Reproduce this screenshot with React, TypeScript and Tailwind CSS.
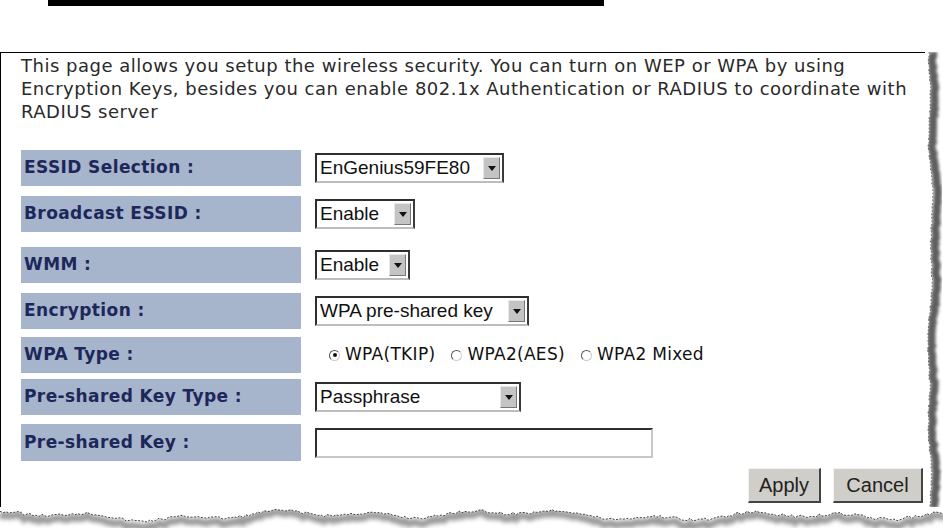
import React from 'react';

const desc = "font-['DejaVu_Sans','Liberation_Sans',sans-serif]";
const arial = "font-['Liberation_Sans',Arial,sans-serif]";

// deterministic noise for the torn paper edge
function wobble(count: number, seed: number, amp: number) {
  const out: number[] = [];
  let s = seed;
  for (let i = 0; i < count; i++) {
    s = (s * 9301 + 49297) % 233280;
    const r = s / 233280;
    const slow = Math.sin(i / 5 + seed) * 0.45 + Math.sin(i / 13 + seed * 2) * 0.5 + Math.sin(i / 31) * 0.35;
    out.push((r - 0.5) * amp * 0.6 + slow * amp);
  }
  return out;
}

const RightEdge: React.FC<{ height: number }> = ({ height }) => {
  const pts = wobble(Math.ceil(height / 3) + 1, 11, 2.5);
  const line = pts.map((d, i) => `${5 + d},${i * 3}`).join(' ');
  return (
    <svg width="18" height={height} className="shrink-0 block">
      <defs>
        <filter id="rb" x="-50%" y="-5%" width="200%" height="110%">
          <feGaussianBlur stdDeviation="1.4" />
        </filter>
      </defs>
      <polyline points={pts.map((d, i) => `${9 + d * 1.3},${i * 3}`).join(' ')} fill="none" stroke="#5e5e5e" strokeWidth="8" filter="url(#rb)" />
      <polygon points={`0,0 ${line} 0,${height}`} fill="#ffffff" />
      <polyline points={line} fill="none" stroke="#555" strokeWidth="0.8" strokeDasharray="2 1.5" />
    </svg>
  );
};

const BottomEdge: React.FC = () => {
  const w = 943;
  const pts = wobble(Math.ceil(w / 3) + 1, 5, 5);
  const line = pts.map((d, i) => `${i * 3},${8 + d}`).join(' ');
  return (
    <svg width={w} height="24" className="block">
      <defs>
        <filter id="bb" x="-5%" y="-100%" width="110%" height="300%">
          <feGaussianBlur stdDeviation="2" />
        </filter>
      </defs>
      <polyline points={pts.map((d, i) => `${i * 3},${12 + d * 1.3}`).join(' ')} fill="none" stroke="#9a9a9a" strokeWidth="7" filter="url(#bb)" />
      <polygon points={`0,0 ${line} ${w},0`} fill="#ffffff" />
      <polyline points={line} fill="none" stroke="#333" strokeWidth="0.9" strokeDasharray="2 1.5" />
    </svg>
  );
};

const Label: React.FC<{ children: React.ReactNode }> = ({ children }) => (
  <div className={`w-[280px] h-full bg-[#a6b4cc] flex items-center pl-[3px] text-[17px] font-bold text-[#1d2759] tracking-[0.4px] ${desc}`}>
    {children}
  </div>
);

const Arrow: React.FC = () => (
  <div className="w-[17px] my-[2px] mr-[2px] bg-[#c4c4c4] border border-[#e8e8e8] border-r-[#777] border-b-[#777] flex items-center justify-center">
    <svg width="8" height="5" viewBox="0 0 8 5">
      <path d="M0 0 L8 0 L4 5 Z" fill="#111" />
    </svg>
  </div>
);

const Select: React.FC<{ w: string; text: string }> = ({ w, text }) => (
  <div className={`${w} h-[30px] flex bg-white border-2 border-[#2e2e2e] border-b-[#bdbdbd] border-r-[#3a3a3a]`}>
    <div className={`flex-1 flex items-center pl-[3px] text-[19px] text-[#111] whitespace-nowrap ${arial}`}>{text}</div>
    <Arrow />
  </div>
);

const Radio: React.FC<{ checked?: boolean; label: string }> = ({ checked, label }) => (
  <div className="flex items-center gap-[5px]">
    <span className="w-[11px] h-[11px] rounded-full border border-[#555] border-b-[#ccc] border-r-[#ccc] flex items-center justify-center">
      {checked && <span className="w-[4px] h-[4px] rounded-full bg-[#111]" />}
    </span>
    <span className={`text-[17px] tracking-[0.3px] text-[#111] ${desc}`}>{label}</span>
  </div>
);

const Row: React.FC<{ mt: string; h?: string; label: string; children: React.ReactNode }> = ({ mt, h = 'h-[36px]', label, children }) => (
  <div className={`flex items-center ${mt} ${h}`}>
    <div className="ml-[20px] h-full">
      <Label>{label}</Label>
    </div>
    <div className="ml-[14px] flex items-center">{children}</div>
  </div>
);

const Button: React.FC<{ w: string; children: React.ReactNode }> = ({ w, children }) => (
  <button className={`${w} h-[35px] bg-[#d0cec8] border border-[#f2f2f2] border-r-2 border-b-2 border-r-[#444] border-b-[#444] text-[20px] text-[#222] ${arial}`}>
    {children}
  </button>
);

export default function App() {
  return (
    <div className="w-[943px] h-[528px] bg-white overflow-hidden">
      <div className="ml-[48px] w-[556px] h-[6px] bg-black" />
      <div className="mt-[46px] flex">
        <div className="w-[925px] h-[455px] border-l border-t border-black pt-[1px]">
          <p className={`pl-[20px] text-[18px] leading-[23px] tracking-[0.5px] text-[#2a2a2a] whitespace-nowrap ${desc}`}>
            This page allows you setup the wireless security. You can turn on WEP or WPA by using
            <br />
            Encryption Keys, besides you can enable 802.1x Authentication or RADIUS to coordinate with
            <br />
            RADIUS server
          </p>
          <Row mt="mt-[27px]" label="ESSID Selection :">
            <Select w="w-[189px]" text="EnGenius59FE80" />
          </Row>
          <Row mt="mt-[10px]" label="Broadcast ESSID :">
            <Select w="w-[100px]" text="Enable" />
          </Row>
          <Row mt="mt-[15px]" label="WMM :">
            <Select w="w-[95px]" text="Enable" />
          </Row>
          <Row mt="mt-[10px]" label="Encryption :">
            <Select w="w-[214px]" text="WPA pre-shared key" />
          </Row>
          <Row mt="mt-[8px]" label="WPA Type :">
            <div className="flex items-center gap-[16px] pl-[14px]">
              <Radio checked label="WPA(TKIP)" />
              <Radio label="WPA2(AES)" />
              <Radio label="WPA2 Mixed" />
            </div>
          </Row>
          <Row mt="mt-[6px]" label="Pre-shared Key Type :">
            <Select w="w-[206px]" text="Passphrase" />
          </Row>
          <Row mt="mt-[9px]" h="h-[37px]" label="Pre-shared Key :">
            <div className="w-[338px] h-[30px] bg-white border-2 border-[#2e2e2e] border-b-[#c8c8c8] border-r-[#c8c8c8]" />
          </Row>
          <div className="mt-[7px] flex justify-end gap-[12px] pr-[2px]">
            <Button w="w-[73px]">Apply</Button>
            <Button w="w-[90px]">Cancel</Button>
          </div>
        </div>
        <RightEdge height={455} />
      </div>
      <BottomEdge />
    </div>
  );
}
